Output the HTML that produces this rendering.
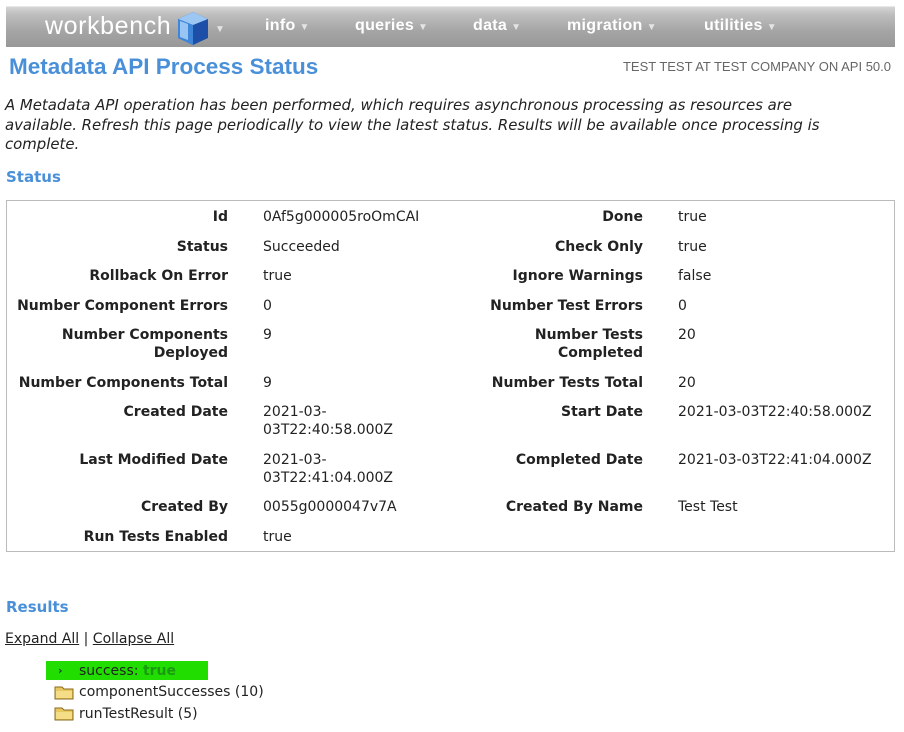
<!DOCTYPE html>
<html><head><meta charset="utf-8"><style>
body{margin:0;width:904px;height:732px;background:#fff;font-family:"DejaVu Sans","Liberation Sans",sans-serif;font-size:14px;color:#222;position:relative;overflow:hidden}
.a{position:absolute;white-space:nowrap;line-height:18px}
.nav{position:absolute;left:6px;top:6px;width:889px;height:40px;background:linear-gradient(#d4d4d4,#bdbdbd 20%,#a5a5a5 60%,#989898);border-top:1px solid #e8e8e8}
.nv{position:absolute;top:10px;color:#fff;font-family:"Liberation Sans",sans-serif;font-size:16px;font-weight:bold;letter-spacing:0.3px}
.nv small{font-size:10px;color:#e4e4e4;margin-left:4px}
.l{position:absolute;white-space:nowrap;line-height:18px;font-weight:bold;text-align:right}
.h{color:#4a90d9;font-weight:bold;font-size:15px}
</style></head><body>
<div class="nav">
<div class="nv" style="left:39px;top:5px;font-size:25px;font-weight:normal;letter-spacing:0.6px">workbench</div>
<svg style="position:absolute;left:170px;top:2px" width="34" height="38" viewBox="0 0 34 36"><polygon points="17,2 32,9 32,28 17,35 2,28 2,9" fill="#1d4fa8"/><polygon points="17,2 32,9 17,15 2,9" fill="#9cc7f2"/><polygon points="2,9 17,15 17,35 2,28" fill="#3f86d8"/><polygon points="4,11 12,14 12,30 4,27" fill="#bfe0ff" opacity=".7"/></svg>
<div class="nv" style="left:205px;top:12px"><small>▼</small></div>
<div class="nv" style="left:259px">info<small>▼</small></div>
<div class="nv" style="left:349px">queries<small>▼</small></div>
<div class="nv" style="left:467px">data<small>▼</small></div>
<div class="nv" style="left:561px">migration<small>▼</small></div>
<div class="nv" style="left:698px">utilities<small>▼</small></div>
</div>
<div class="a" style="left:9px;top:53px;font-family:'Liberation Sans',sans-serif;font-size:22.5px;font-weight:bold;color:#4a90d9;line-height:28px">Metadata API Process Status</div>
<div class="a" style="right:13px;top:58px;font-family:'Liberation Sans',sans-serif;font-size:13px;color:#666">TEST TEST AT TEST COMPANY ON API 50.0</div>
<div class="a" style="left:5px;top:96px;font-style:italic;line-height:19.5px;font-size:14.9px">A Metadata API operation has been performed, which requires asynchronous processing as resources are<br>available. Refresh this page periodically to view the latest status. Results will be available once processing is<br>complete.</div>
<div class="a h" style="left:6px;top:168px">Status</div>
<div style="position:absolute;left:6px;top:200px;width:887px;height:350px;border:1px solid #bbb"></div>

<div class="l" style="right:676px;top:208px">Id</div><div class="a" style="left:263px;top:208px">0Af5g000005roOmCAI</div>
<div class="l" style="right:261px;top:208px">Done</div><div class="a" style="left:678px;top:208px">true</div>
<div class="l" style="right:676px;top:238px">Status</div><div class="a" style="left:263px;top:238px">Succeeded</div>
<div class="l" style="right:261px;top:238px">Check Only</div><div class="a" style="left:678px;top:238px">true</div>
<div class="l" style="right:676px;top:267px">Rollback On Error</div><div class="a" style="left:263px;top:267px">true</div>
<div class="l" style="right:261px;top:267px">Ignore Warnings</div><div class="a" style="left:678px;top:267px">false</div>
<div class="l" style="right:676px;top:297px">Number Component Errors</div><div class="a" style="left:263px;top:297px">0</div>
<div class="l" style="right:261px;top:297px">Number Test Errors</div><div class="a" style="left:678px;top:297px">0</div>
<div class="l" style="right:676px;top:326px">Number Components<br>Deployed</div><div class="a" style="left:263px;top:326px">9</div>
<div class="l" style="right:261px;top:326px">Number Tests<br>Completed</div><div class="a" style="left:678px;top:326px">20</div>
<div class="l" style="right:676px;top:374px">Number Components Total</div><div class="a" style="left:263px;top:374px">9</div>
<div class="l" style="right:261px;top:374px">Number Tests Total</div><div class="a" style="left:678px;top:374px">20</div>
<div class="l" style="right:676px;top:403px">Created Date</div><div class="a" style="left:263px;top:403px">2021-03-<br>03T22:40:58.000Z</div>
<div class="l" style="right:261px;top:403px">Start Date</div><div class="a" style="left:678px;top:403px">2021-03-03T22:40:58.000Z</div>
<div class="l" style="right:676px;top:451px">Last Modified Date</div><div class="a" style="left:263px;top:451px">2021-03-<br>03T22:41:04.000Z</div>
<div class="l" style="right:261px;top:451px">Completed Date</div><div class="a" style="left:678px;top:451px">2021-03-03T22:41:04.000Z</div>
<div class="l" style="right:676px;top:498px">Created By</div><div class="a" style="left:263px;top:498px">0055g0000047v7A</div>
<div class="l" style="right:261px;top:498px">Created By Name</div><div class="a" style="left:678px;top:498px">Test Test</div>
<div class="l" style="right:676px;top:528px">Run Tests Enabled</div><div class="a" style="left:263px;top:528px">true</div>

<div class="a h" style="left:6px;top:598px">Results</div>
<div class="a" style="left:5px;top:630px"><u>Expand All</u> | <u>Collapse All</u></div>
<div style="position:absolute;left:46px;top:661px;width:162px;height:19px;background:#22dd00"></div>
<div class="a" style="left:58px;top:662px;font-size:11px;font-weight:bold;color:#143">›</div>
<div class="a" style="left:79px;top:662px">success: <span style="color:#1a9a10;font-weight:bold">true</span></div>
<svg style="position:absolute;left:54px;top:685px" width="20" height="15"><path d="M1 2h7l2 2h9v10H1z" fill="#e8c860" stroke="#8a6a20"/><rect x="2" y="6" width="16" height="7" fill="#f5dd88"/></svg>
<div class="a" style="left:79px;top:683px">componentSuccesses (10)</div>
<svg style="position:absolute;left:54px;top:706px" width="20" height="15"><path d="M1 2h7l2 2h9v10H1z" fill="#e8c860" stroke="#8a6a20"/><rect x="2" y="6" width="16" height="7" fill="#f5dd88"/></svg>
<div class="a" style="left:79px;top:705px">runTestResult (5)</div>
</body></html>
